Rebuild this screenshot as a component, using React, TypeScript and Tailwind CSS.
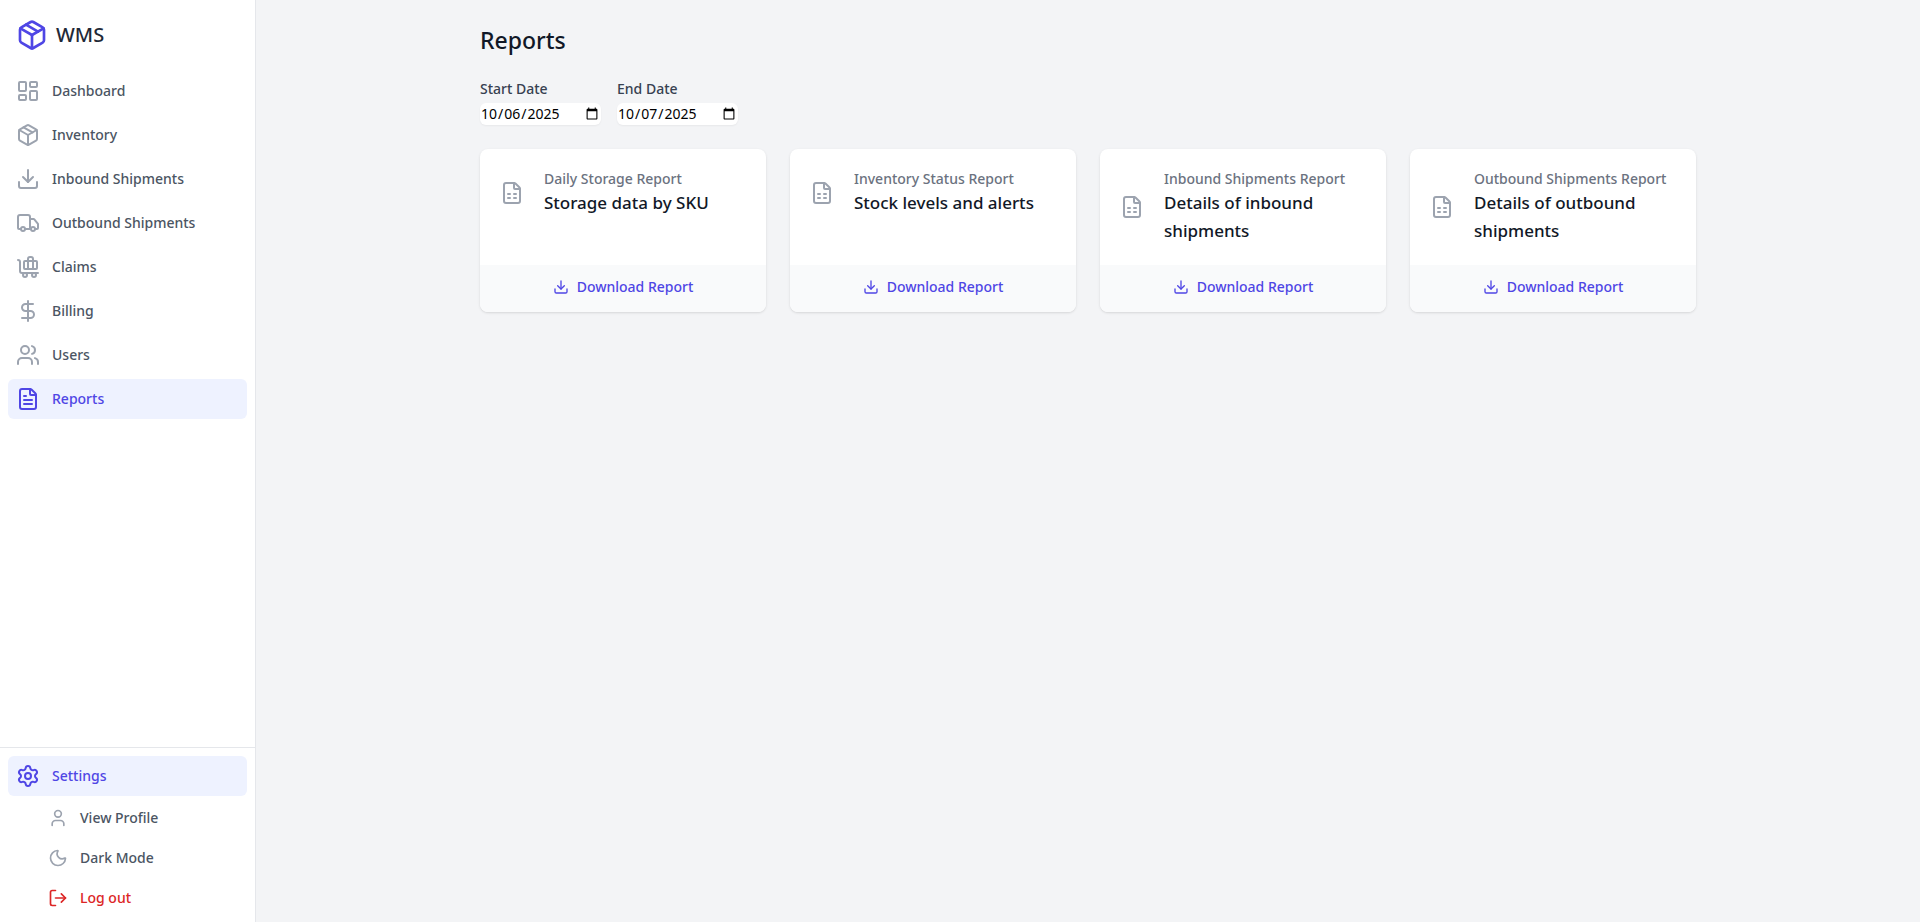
import { useState } from 'react';
import {
  BaggageClaim,
  DollarSign,
  Download,
  FileSpreadsheet,
  FileText,
  LayoutDashboard,
  LogOut,
  Moon,
  Package,
  Settings,
  Truck,
  User,
  Users,
  type LucideIcon,
} from 'lucide-react';

const navigation: { name: string; icon: LucideIcon; current?: boolean }[] = [
  { name: 'Dashboard', icon: LayoutDashboard },
  { name: 'Inventory', icon: Package },
  { name: 'Inbound Shipments', icon: Download },
  { name: 'Outbound Shipments', icon: Truck },
  { name: 'Claims', icon: BaggageClaim },
  { name: 'Billing', icon: DollarSign },
  { name: 'Users', icon: Users },
  { name: 'Reports', icon: FileText, current: true },
];

const reports = [
  { name: 'Daily Storage Report', description: 'Storage data by SKU' },
  { name: 'Inventory Status Report', description: 'Stock levels and alerts' },
  { name: 'Inbound Shipments Report', description: 'Details of inbound shipments' },
  { name: 'Outbound Shipments Report', description: 'Details of outbound shipments' },
];

function Sidebar() {
  return (
    <aside className="flex w-64 shrink-0 flex-col border-r border-[#e5e7eb] bg-white">
      <div className="flex items-center px-4 pt-[19px]">
        <Package className="size-8 text-[#4f46e5]" />
        <span className="ml-2 text-xl font-medium text-[#1f2937]">WMS</span>
      </div>
      <nav className="mt-5 flex flex-1 flex-col gap-1 px-2">
        {navigation.map(({ name, icon: Icon, current }) => (
          <a
            key={name}
            href="#"
            aria-current={current ? 'page' : undefined}
            className={
              current
                ? 'flex items-center rounded-md bg-[#eef2ff] p-2 text-sm font-medium text-[#4f46e5]'
                : 'flex items-center rounded-md p-2 text-sm font-medium text-[#4b5563]'
            }
          >
            <Icon className={current ? 'mr-3 size-6 text-[#4f46e5]' : 'mr-3 size-6 text-[#9ca3af]'} />
            {name}
          </a>
        ))}
      </nav>
      <div className="border-t border-[#e5e7eb] px-2 pt-2 pb-1.5">
        <button
          type="button"
          aria-expanded="true"
          className="flex w-full items-center rounded-md bg-[#eef2ff] p-2 text-sm font-medium text-[#4f46e5]"
        >
          <Settings className="mr-3 size-6" />
          Settings
        </button>
        <div className="mt-1 flex flex-col gap-1 pl-8">
          <a href="#" className="flex items-center rounded-md p-2 text-sm font-medium text-[#4b5563]">
            <User className="mr-3 size-5 text-[#9ca3af]" />
            View Profile
          </a>
          <button type="button" className="flex items-center rounded-md p-2 text-sm font-medium text-[#4b5563]">
            <Moon className="mr-3 size-5 text-[#9ca3af]" />
            Dark Mode
          </button>
          <button type="button" className="flex items-center rounded-md p-2 text-sm font-medium text-[#dc2626]">
            <LogOut className="mr-3 size-5" />
            Log out
          </button>
        </div>
      </div>
    </aside>
  );
}

function DateField({ id, label, initial }: { id: string; label: string; initial: string }) {
  const [value, setValue] = useState(initial);
  return (
    <div>
      <label htmlFor={id} className="block text-sm font-medium text-[#374151]">
        {label}
      </label>
      <input
        id={id}
        type="date"
        value={value}
        onChange={(e) => setValue(e.target.value)}
        className="mt-1 block h-[22px] w-[121px] rounded-md bg-white text-sm text-black shadow-xs"
      />
    </div>
  );
}

function ReportCard({ name, description }: { name: string; description: string }) {
  return (
    <div className="flex flex-col overflow-hidden rounded-lg bg-white shadow-sm">
      <div className="flex-1 p-5">
        <div className="flex items-center">
          <FileSpreadsheet className="size-6 shrink-0 text-[#9ca3af]" />
          <dl className="ml-5 flex-1">
            <dt className="truncate text-sm font-medium text-[#6b7280]">{name}</dt>
            <dd className="text-[17px] leading-7 font-medium text-[#111827]">{description}</dd>
          </dl>
        </div>
      </div>
      <div className="bg-[#f9fafb] px-5 pt-3 pb-[15px]">
        <button type="button" className="flex w-full items-center justify-center text-sm font-medium text-[#4f46e5]">
          <Download className="mr-2 size-4" />
          Download Report
        </button>
      </div>
    </div>
  );
}

export default function App() {
  return (
    <div className="flex min-h-screen bg-[#f3f4f6] font-['Noto_Sans',sans-serif]">
      <Sidebar />
      <main className="flex-1 py-6">
        <div className="mx-auto max-w-7xl px-8">
          <h1 className="text-[23px] leading-8 font-medium text-[#111827]">Reports</h1>
          <div className="mt-[23px] flex gap-4">
            <DateField id="start-date" label="Start Date" initial="2025-10-06" />
            <DateField id="end-date" label="End Date" initial="2025-10-07" />
          </div>
          <div className="mt-6 grid grid-cols-1 gap-6 sm:grid-cols-2 lg:grid-cols-4">
            {reports.map((report) => (
              <ReportCard key={report.name} {...report} />
            ))}
          </div>
        </div>
      </main>
    </div>
  );
}
